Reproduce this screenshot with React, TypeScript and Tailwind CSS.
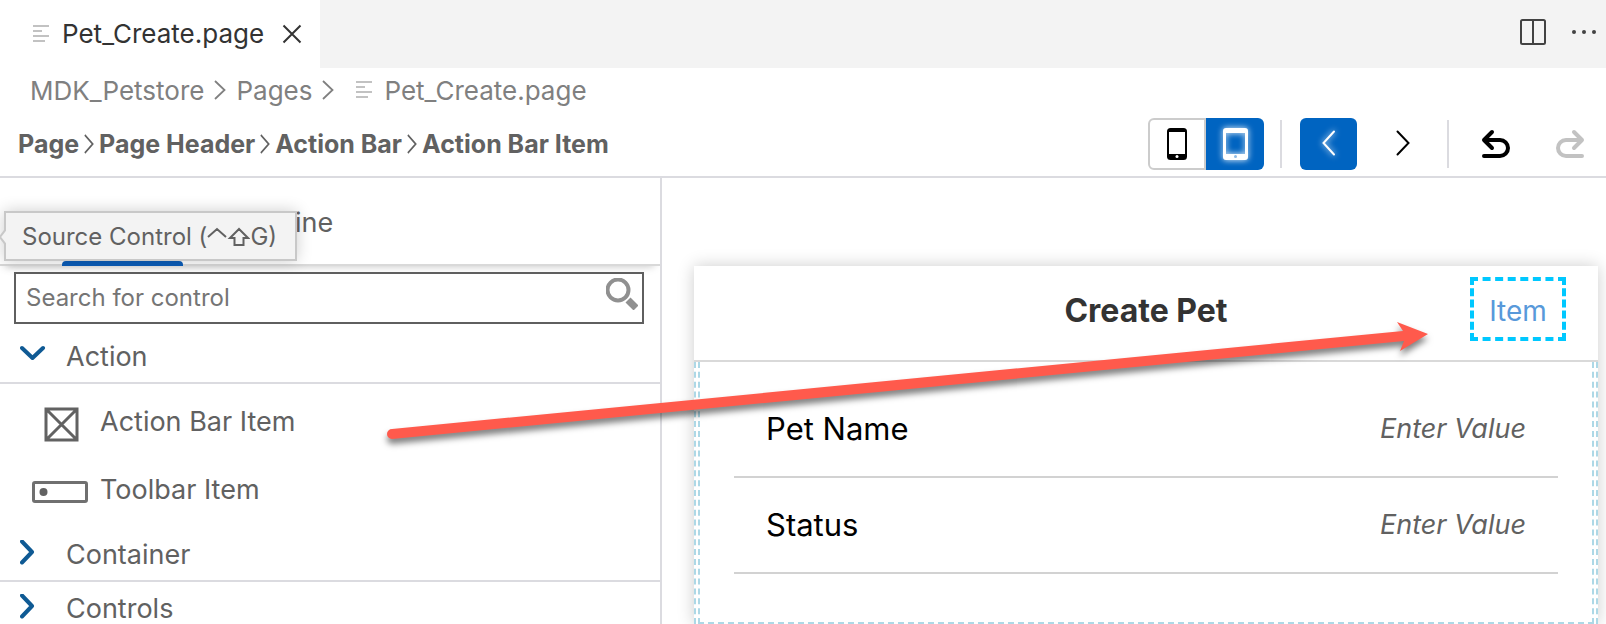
import React from "react";

function FileLines() {
  return (
    <svg width="18" height="18" viewBox="0 0 18 18" fill="#c2c2c2" aria-hidden="true">
      <path d="M0 0h16v2H0zM0 5h9v2H0zM0 10h16v2H0zM0 15h12v2H0z" />
    </svg>
  );
}

function Chevron({ small = false }: { small?: boolean }) {
  return (
    <svg
      width={small ? 10 : 12}
      height="20"
      viewBox="0 0 12 20"
      preserveAspectRatio="none"
      fill="none"
      stroke="currentColor"
      strokeWidth="1.8"
      aria-hidden="true"
    >
      <path d="M1 1l9.500 9L1 19" />
    </svg>
  );
}

function Fold({ label, open = false }: { label: string; open?: boolean }) {
  return (
    <button
      aria-expanded={open}
      className="flex h-[54px] w-full shrink-0 items-center gap-[19px] border-b-2 border-[#dbdbe0] pb-0.5 pl-5 text-left"
    >
      <svg
        className="h-[26px] w-[27px] shrink-0"
        viewBox="0 0 27 26"
        fill="none"
        stroke="#0f5a94"
        strokeWidth="4"
        strokeLinecap="round"
        strokeLinejoin="round"
        aria-hidden="true"
      >
        {open ? <path d="M2 6l10.500 10L23 6" /> : <path d="M2 1.500l10 10.500L2 22.500" />}
      </svg>
      <span className="pt-1 text-[27px] leading-8">{label}</span>
    </button>
  );
}

function Field({ label }: { label: string }) {
  return (
    <label className="flex h-24 items-center justify-between border-b-2 border-[#d2d2d2] px-8">
      <span className="text-[31px] leading-9 text-black">{label}</span>
      <input
        placeholder="Enter Value"
        className="w-60 bg-transparent text-right text-[27px] italic leading-9 outline-none placeholder:text-[#616161]"
      />
    </label>
  );
}

const trail = ["Page", "Page Header", "Action Bar", "Action Bar Item"];

export default function App() {
  return (
    <div className="relative flex h-screen flex-col overflow-hidden bg-white font-['Inter','Liberation_Sans',sans-serif] text-[#616161]">
      <header className="flex h-[68px] shrink-0 items-center justify-between bg-[#f3f3f3]">
        <div className="flex h-full w-80 items-center bg-white pl-[33px] text-[#333333]">
          <FileLines />
          <span className="pl-[11px] text-[26px] leading-8">Pet_Create.page</span>
          <button aria-label="Close" className="ml-auto mr-[18px]">
            <svg width="20" height="20" viewBox="0 0 20 20" stroke="#333" strokeWidth="2" aria-hidden="true">
              <path d="M1.500 1.500l17 17M18.500 1.500l-17 17" />
            </svg>
          </button>
        </div>
        <div className="flex items-center gap-6 pb-1 pr-[9px]">
          <button aria-label="Split editor">
            <svg width="28" height="28" viewBox="0 0 28 28" fill="none" stroke="#424242" strokeWidth="2" aria-hidden="true">
              <rect x="2" y="2" width="24" height="24" rx="1.500" />
              <path d="M14 2v24" />
            </svg>
          </button>
          <button aria-label="More actions">
            <svg width="26" height="6" viewBox="0 0 26 6" fill="#424242" aria-hidden="true">
              <circle cx="3" cy="3" r="2" />
              <circle cx="13" cy="3" r="2" />
              <circle cx="23" cy="3" r="2" />
            </svg>
          </button>
        </div>
      </header>

      <nav aria-label="File path" className="flex h-[46px] shrink-0 items-center gap-2.5 pb-0.5 pl-[30px] text-[26px] text-[#808080]">
        <span>MDK_Petstore</span>
        <Chevron />
        <span>Pages</span>
        <Chevron />
        <span className="flex items-center gap-2.5 pl-3">
          <FileLines />
          <span>Pet_Create.page</span>
        </span>
      </nav>

      <div className="flex h-16 shrink-0 items-center justify-between border-b-2 border-[#dbdbe0] pb-0.5 pl-[18px] pr-[21px]">
        <nav aria-label="Control path" className="flex items-center gap-[5px] text-[25px] font-bold leading-8">
          {trail.map((name, i) => (
            <React.Fragment key={name}>
              {i > 0 && <Chevron small />}
              <a href="#top">{name}</a>
            </React.Fragment>
          ))}
        </nav>
        <div className="flex items-center">
          <button
            aria-label="Phone"
            className="flex h-[52px] w-[58px] items-center justify-center rounded-l-md border-2 border-[#cccccc] bg-white"
          >
            <svg width="20" height="32" viewBox="0 0 20 32" aria-hidden="true">
              <rect width="20" height="32" rx="3.500" />
              <path fill="#fff" d="M2 4h16v22H2z" />
              <circle cx="10" cy="28.500" r="1.500" fill="#fff" />
            </svg>
          </button>
          <button
            aria-label="Tablet"
            className="flex h-[52px] w-[58px] items-center justify-center rounded-r-md bg-[#0064c1]"
          >
            <svg className="drop-shadow-[0_0_3px_#ffffff]" width="25" height="32" viewBox="0 0 25 32" aria-hidden="true">
              <path
                fill="#fff"
                fillRule="evenodd"
                d="M3 0h19a3 3 0 0 1 3 3v26a3 3 0 0 1-3 3H3a3 3 0 0 1-3-3V3a3 3 0 0 1 3-3zM3 5v21h19V5z"
              />
              <circle cx="12.500" cy="28.500" r="1.500" fill="#8fbbe6" />
            </svg>
          </button>
          <span className="mx-4 h-12 w-0.5 bg-[#dbdbe0]" />
          <button
            aria-label="Previous"
            className="ml-0.5 flex h-[52px] w-[57px] items-center justify-center rounded-md bg-[#0064c1] pb-0.5"
          >
            <svg
              className="drop-shadow-[0_0_3px_#ffffff]"
              width="14"
              height="26"
              viewBox="0 0 14 26"
              fill="none"
              stroke="#fff"
              strokeWidth="2"
              strokeLinecap="round"
              aria-hidden="true"
            >
              <path d="M12 1.500L1.500 13 12 24.500" />
            </svg>
          </button>
          <button aria-label="Next" className="ml-[17px] flex h-[52px] w-[57px] items-center justify-center pb-0.5">
            <svg width="14" height="26" viewBox="0 0 14 26" fill="none" stroke="#000" strokeWidth="2" strokeLinecap="round" aria-hidden="true">
              <path d="M1.500 1.500L12.500 13 1.500 24.500" />
            </svg>
          </button>
          <span className="mx-4 h-12 w-0.5 bg-[#dbdbe0]" />
          <button aria-label="Undo" className="ml-4">
            <svg
              width="30"
              height="30"
              viewBox="0 0 30 30"
              fill="none"
              stroke="#000"
              strokeWidth="4"
              strokeLinecap="round"
              strokeLinejoin="round"
              aria-hidden="true"
            >
              <path d="M11 3L3 11l8 8M3 11h16a8 8 0 0 1 0 16H3" />
            </svg>
          </button>
          <button aria-label="Redo" className="ml-[44px]" disabled>
            <svg
              width="30"
              height="30"
              viewBox="0 0 30 30"
              fill="none"
              stroke="#c2c2c2"
              strokeWidth="4"
              strokeLinecap="round"
              strokeLinejoin="round"
              aria-hidden="true"
            >
              <path d="M19 3l8 8-8 8M27 11H11a8 8 0 0 0 0 16h16" />
            </svg>
          </button>
        </div>
      </div>

      <main className="flex min-h-0 flex-1">
        <aside className="flex w-[662px] shrink-0 flex-col overflow-hidden border-r-2 border-[#dbdbe0]">
          <div className="flex h-[88px] shrink-0 gap-[60px] border-b-2 border-[#d9d9d9] pl-[62px] text-[27px] shadow-[0_6px_8px_-6px_rgba(0,0,0,0.25)]">
            <button className="relative w-[121px] pt-1">
              Controls
              <span className="absolute -bottom-0.5 left-0 h-[5px] w-full rounded-t bg-[#0a5cb8]" />
            </button>
            <button className="pt-1">Outline</button>
          </div>
          <label className="ml-[14px] mr-4 mt-1.5 flex h-[52px] shrink-0 items-center border-2 border-[#5f5f5f] bg-white">
            <input
              aria-label="Search for control"
              placeholder="Search for control"
              className="h-full min-w-0 flex-1 pb-0.5 pl-2.5 text-[24px] outline-none placeholder:text-[#757575]"
            />
            <svg className="mb-2 mr-1" width="32" height="32" viewBox="0 0 32 32" fill="none" stroke="#909090" aria-hidden="true">
              <circle cx="12" cy="12" r="10.500" strokeWidth="4" />
              <path d="M22 22l8 8" strokeWidth="7" />
            </svg>
          </label>
          <div className="mt-1.5 flex flex-col">
            <Fold label="Action" open />
            <div className="py-1 text-[27px] leading-8">
              <div className="flex h-[68px] items-center">
                <span className="flex w-[100px] shrink-0 pl-11 pt-1">
                  <svg width="35" height="35" viewBox="0 0 35 35" fill="none" stroke="#626262" strokeWidth="3" aria-hidden="true">
                    <path d="M2 2h31v31H2zM2 2l31 31M33 2L2 33" />
                  </svg>
                </span>
                Action Bar Item
              </div>
              <div className="flex h-[68px] items-center">
                <span className="flex w-[100px] shrink-0 pl-8 pt-1">
                  <svg width="56" height="22" viewBox="0 0 56 22" fill="none" stroke="#707070" strokeWidth="3" aria-hidden="true">
                    <rect x="1.500" y="1.500" width="53" height="19" rx="1.500" />
                    <circle cx="11.500" cy="11" r="4" fill="#626262" stroke="none" />
                  </svg>
                </span>
                Toolbar Item
              </div>
            </div>
            <Fold label="Container" />
            <Fold label="Controls" />
          </div>
        </aside>

        <section className="flex flex-1 flex-col pl-8 pr-2 pt-[88px]">
          <div className="flex flex-1 flex-col shadow-[0_0_16px_rgba(0,0,0,0.2)]">
            <div className="grid h-24 shrink-0 grid-cols-[1fr_auto_1fr] items-center border-b-2 border-[#d9d9d9] pb-2 pr-8">
              <span />
              <h1 className="pl-8 pt-1 text-[32px] font-bold leading-9 text-[#333333]">Create Pet</h1>
              <button className="h-16 w-24 justify-self-end border-4 border-dashed border-[#00c8ff] pt-1 text-[28px] text-[#5899da]">
                Item
              </button>
            </div>
            <div className="flex flex-1 border-x-2 border-dashed border-[#add8e6] px-0.5">
              <div className="flex-1 border-2 border-t-0 border-dashed border-[#add8e6] px-[34px] pt-5">
                <Field label="Pet Name" />
                <Field label="Status" />
              </div>
            </div>
          </div>
        </section>
      </main>

      <div
        role="tooltip"
        className="absolute left-1 top-[211px] flex h-[50px] w-[293px] items-center border-2 border-[#c8c8c8] bg-[#f3f3f3] pl-4 pt-0.5 text-[24px] shadow-[0_0_16px_rgba(0,0,0,0.2)]"
      >
        <svg className="absolute -left-1.5 top-4" width="6" height="16" viewBox="0 0 6 16" aria-hidden="true">
          <path d="M6 0L0 8l6 8" fill="#f3f3f3" stroke="#c8c8c8" strokeWidth="2" />
        </svg>
        <span className="flex items-center whitespace-pre">
          Source Control (
          <svg width="43" height="20" viewBox="0 0 43 20" fill="none" stroke="#616161" strokeWidth="2" aria-label="Control Shift">
            <path d="M1 10l9-8 9 8M32 2L23 11h4.500v7h9v-7H41z" />
          </svg>
          G)
        </span>
      </div>

      <svg
        className="pointer-events-none absolute left-[380px] top-[310px] drop-shadow-[0_5px_3px_rgba(0,0,0,0.5)]"
        width="1060"
        height="140"
        viewBox="380 310 1060 140"
        fill="#ff5a4c"
        aria-hidden="true"
      >
        <path d="M392 429L1403 331L1397 322L1428 334L1400 351L1404 341L392 439A5 5 0 0 1 392 429Z" />
      </svg>
    </div>
  );
}
